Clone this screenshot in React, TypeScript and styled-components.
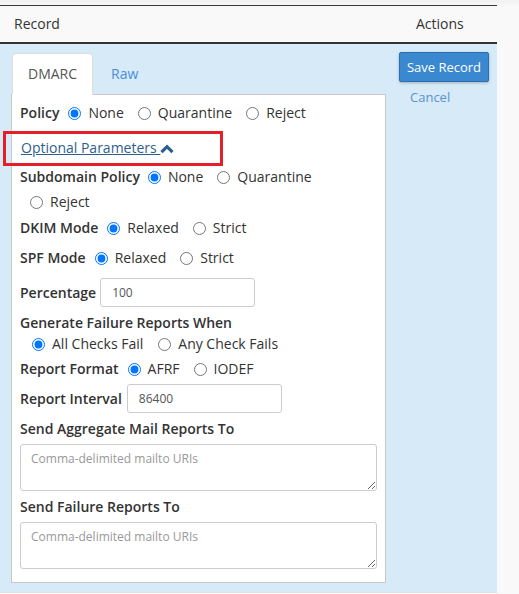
import React, { useState } from 'react';
import styled, { createGlobalStyle } from 'styled-components';

const GlobalStyle = createGlobalStyle`
  html, body {
    margin: 0;
    padding: 0;
    background: #f9f9f9;
  }
  body {
    font-family: "Open Sans", "Liberation Sans", Arial, sans-serif;
    font-size: 14px;
    color: #333;
  }
`

const TopShade = styled.div`
  height: 5px;
  background: linear-gradient(#f1f1f1, #f7f7f7);
`

const Table = styled.div`
  width: 497px;
  border-top: 1px solid #3a3a3a;
`

const HeaderRow = styled.div`
  display: grid;
  grid-template-columns: 391px 1fr;
  height: 36px;
  align-items: center;
  border-bottom: 2px solid #333;
  background: #f9f9f9;
`

const HeaderCell = styled.div<{ $indent: number }>`
  padding-left: ${({ $indent }) => $indent}px;
  line-height: 20px;
  color: #333;
`

const BodyRow = styled.div`
  display: grid;
  grid-template-columns: 391px 1fr;
  background: #d6eaf8;
  border-bottom: 1px solid #e2e2e2;
`

const EditorCell = styled.div`
  padding: 9px 5px 9px 11px;
`

const ActionsCell = styled.div`
  padding: 8px 0 0 8px;
  display: flex;
  flex-direction: column;
  align-items: flex-start;
`

const SaveButton = styled.button`
  width: 90px;
  height: 30px;
  background: #3a88d0;
  border: 1px solid #2c6fae;
  border-radius: 2px;
  box-shadow: 0 1px 3px rgba(0, 0, 0, 0.25);
  color: #fff;
  font-family: inherit;
  font-size: 13px;
  padding: 0;
`

const CancelLink = styled.a`
  margin: 6px 0 0 11px;
  color: #5b93cf;
  font-size: 13px;
  line-height: 18px;
  text-decoration: none;
`

const Tabs = styled.div`
  display: flex;
  margin-bottom: -1px;
  position: relative;
`

const Tab = styled.div<{ $active?: boolean }>`
  padding: 10px 15px;
  line-height: 20px;
  margin-left: ${({ $active }) => ($active ? 1 : 2)}px;
  border: 1px solid ${({ $active }) => ($active ? '#ddd' : 'transparent')};
  border-bottom-color: transparent;
  border-radius: 4px 4px 0 0;
  background: ${({ $active }) => ($active ? '#fff' : 'transparent')};
  color: ${({ $active }) => ($active ? '#555' : '#4a8fd6')};
`

const Panel = styled.div`
  width: 357px;
  background: #fff;
  border: 1px solid #c8c8c8;
  padding: 8px 8px 13px 8px;
  box-sizing: content-box;
`

const Row = styled.div<{ $gap?: number }>`
  display: flex;
  flex-wrap: wrap;
  align-items: center;
  row-gap: 5px;
  margin-top: ${({ $gap }) => $gap ?? 0}px;
  line-height: 20px;
`

const FieldLabel = styled.span<{ $space?: number }>`
  font-weight: 600;
  margin-right: ${({ $space }) => $space ?? 9}px;
`

const BlockLabel = styled.div<{ $gap: number }>`
  font-weight: 600;
  line-height: 20px;
  margin-top: ${({ $gap }) => $gap}px;
`

const Option = styled.label<{ $lead?: number }>`
  display: inline-flex;
  align-items: center;
  margin-left: ${({ $lead }) => $lead ?? 14}px;
  color: #333;
`

const Radio = styled.input`
  width: 13px;
  height: 13px;
  margin: 0 7px 0 0;
`

const ToggleWrap = styled.div`
  position: relative;
  margin-top: 15px;
  line-height: 20px;
`

const ToggleLink = styled.a`
  margin-left: 1px;
  color: #2c5f8f;
  text-decoration: underline;
`

const Chevron = styled.svg`
  width: 14px;
  height: 10px;
  vertical-align: -1px;
  margin-left: 0;
`

const Highlight = styled.div`
  position: absolute;
  left: -17px;
  top: -7px;
  width: 214px;
  height: 29px;
  border: 3px solid #e51f29;
  pointer-events: none;
`

const TextInput = styled.input`
  width: 155px;
  height: 29px;
  box-sizing: border-box;
  border: 1px solid #ccc;
  border-radius: 3px;
  padding: 0 11px;
  font-family: inherit;
  font-size: 12px;
  color: #555;
  outline: none;
`

const MailArea = styled.textarea`
  display: block;
  width: 357px;
  height: 47px;
  box-sizing: border-box;
  margin-top: 5px;
  border: 1px solid #ccc;
  border-radius: 3px;
  padding: 5px 10px;
  font-family: inherit;
  font-size: 12px;
  line-height: 18px;
  color: #555;
  resize: vertical;
  outline: none;

  &::placeholder {
    color: #999;
  }
`

type Choice = { value: string; label: string; lead?: number }

const RadioSet: React.FC<{ name: string; choices: Choice[]; firstLead?: number }> = ({ name, choices, firstLead = 0 }) => {
  const [picked, setPicked] = useState(choices[0].value)
  return (
    <>
      {choices.map((c, i) => (
        <Option key={c.value} $lead={c.lead ?? (i === 0 ? firstLead : 14)}>
          <Radio type="radio" name={name} checked={picked === c.value} onChange={() => setPicked(c.value)} />
          {c.label}
        </Option>
      ))}
    </>
  )
}

const DmarcEditor: React.FC = () => {
  const [showOptional, setShowOptional] = useState(true)

  return (
    <Panel>
      <Row>
        <FieldLabel>Policy</FieldLabel>
        <RadioSet
          name="policy"
          choices={[
            { value: 'none', label: 'None' },
            { value: 'quarantine', label: 'Quarantine' },
            { value: 'reject', label: 'Reject' },
          ]}
        />
      </Row>

      <ToggleWrap>
        <ToggleLink onClick={() => setShowOptional(!showOptional)}>Optional Parameters </ToggleLink>
        <Chevron viewBox="0 0 14 10">
          <path d="M1.5 8.2 L7 2.7 L12.5 8.2" fill="none" stroke="#2c5f8f" strokeWidth="3.2" strokeLinejoin="miter" />
        </Chevron>
        <Highlight />
      </ToggleWrap>

      {showOptional && (
        <>
          <Row $gap={9}>
            <FieldLabel $space={8}>Subdomain Policy</FieldLabel>
            <RadioSet
              name="sp"
              choices={[
                { value: 'none', label: 'None' },
                { value: 'quarantine', label: 'Quarantine' },
                { value: 'reject', label: 'Reject', lead: 10 },
              ]}
            />
          </Row>

          <Row $gap={6}>
            <FieldLabel>DKIM Mode</FieldLabel>
            <RadioSet
              name="adkim"
              choices={[
                { value: 'r', label: 'Relaxed' },
                { value: 's', label: 'Strict' },
              ]}
            />
          </Row>

          <Row $gap={10}>
            <FieldLabel>SPF Mode</FieldLabel>
            <RadioSet
              name="aspf"
              choices={[
                { value: 'r', label: 'Relaxed' },
                { value: 's', label: 'Strict' },
              ]}
            />
          </Row>

          <Row $gap={10}>
            <FieldLabel $space={4}>Percentage</FieldLabel>
            <TextInput defaultValue="100" />
          </Row>

          <BlockLabel $gap={6}>Generate Failure Reports When</BlockLabel>
          <Row $gap={1}>
            <RadioSet
              name="fo"
              firstLead={12}
              choices={[
                { value: '0', label: 'All Checks Fail' },
                { value: '1', label: 'Any Check Fails', lead: 15 },
              ]}
            />
          </Row>

          <Row $gap={5}>
            <FieldLabel>Report Format</FieldLabel>
            <RadioSet
              name="rf"
              choices={[
                { value: 'afrf', label: 'AFRF' },
                { value: 'iodef', label: 'IODEF' },
              ]}
            />
          </Row>

          <Row $gap={5}>
            <FieldLabel $space={5}>Report Interval</FieldLabel>
            <TextInput defaultValue="86400" />
          </Row>

          <BlockLabel $gap={6}>Send Aggregate Mail Reports To</BlockLabel>
          <MailArea placeholder="Comma-delimited mailto URIs" />

          <BlockLabel $gap={6}>Send Failure Reports To</BlockLabel>
          <MailArea placeholder="Comma-delimited mailto URIs" />
        </>
      )}
    </Panel>
  )
}

const App: React.FC = () => {
  const [tab, setTab] = useState('dmarc')

  return (
    <>
      <GlobalStyle />
      <TopShade />
      <Table>
        <HeaderRow>
          <HeaderCell $indent={14}>Record</HeaderCell>
          <HeaderCell $indent={25}>Actions</HeaderCell>
        </HeaderRow>
        <BodyRow>
          <EditorCell>
            <Tabs>
              <Tab $active={tab === 'dmarc'} onClick={() => setTab('dmarc')}>DMARC</Tab>
              <Tab $active={tab === 'raw'} onClick={() => setTab('raw')}>Raw</Tab>
            </Tabs>
            <DmarcEditor />
          </EditorCell>
          <ActionsCell>
            <SaveButton>Save Record</SaveButton>
            <CancelLink href="#">Cancel</CancelLink>
          </ActionsCell>
        </BodyRow>
      </Table>
    </>
  )
}

export default App
